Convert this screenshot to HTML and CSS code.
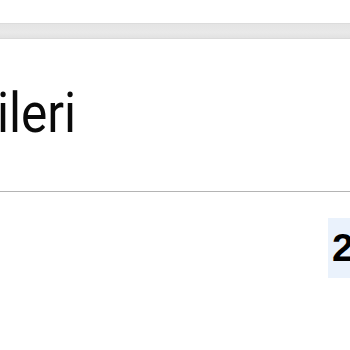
FILE: index.html
```html
<!DOCTYPE html>
<html>
<head>
    <title>ileri</title>
    <link rel="stylesheet" href="styles.css">
</head>
<body>
    <div class="toolbar"></div>
    <div class="page">
        <h1 class="title"><span class="word">ileri</span></h1>
        <div class="rule"></div>
        <div class="row">
            <div class="cell">2</div>
        </div>
    </div>
</body>
</html>
```

FILE: styles.css
```css
body {
    margin: 0;
    background-color: #fff;
    font-family: Roboto, "Liberation Sans", sans-serif;
    overflow: hidden;
}
.toolbar {
    margin-top: 23px;
    height: 14px;
    border-top: 1px solid #dcdcdc;
    border-bottom: 1px solid #dadada;
    background: linear-gradient(#e4e4e4, #e9e9e9 60%, #e2e2e2);
}
.page {
    padding-top: 47px;
}
.title {
    margin: 0;
    height: 105px;
    font-family: Roboto, "Liberation Sans", sans-serif;
    font-weight: normal;
    font-size: 55px;
    line-height: 54px;
    color: #0a0a0a;
}
.word {
    display: inline-block;
    margin-left: -3px;
    transform: scaleX(0.9);
    transform-origin: left center;
}
.rule {
    height: 1px;
    background-color: #b4b4b4;
}
.row {
    display: flex;
    justify-content: flex-end;
    padding-top: 26px;
}
.cell {
    width: 18px;
    height: 60px;
    padding-left: 4px;
    background-color: #eaf2fc;
    font-family: "Liberation Sans", Arial, sans-serif;
    font-weight: bold;
    font-size: 39px;
    line-height: 60px;
    overflow: hidden;
    white-space: nowrap;
    color: #000;
}
```
